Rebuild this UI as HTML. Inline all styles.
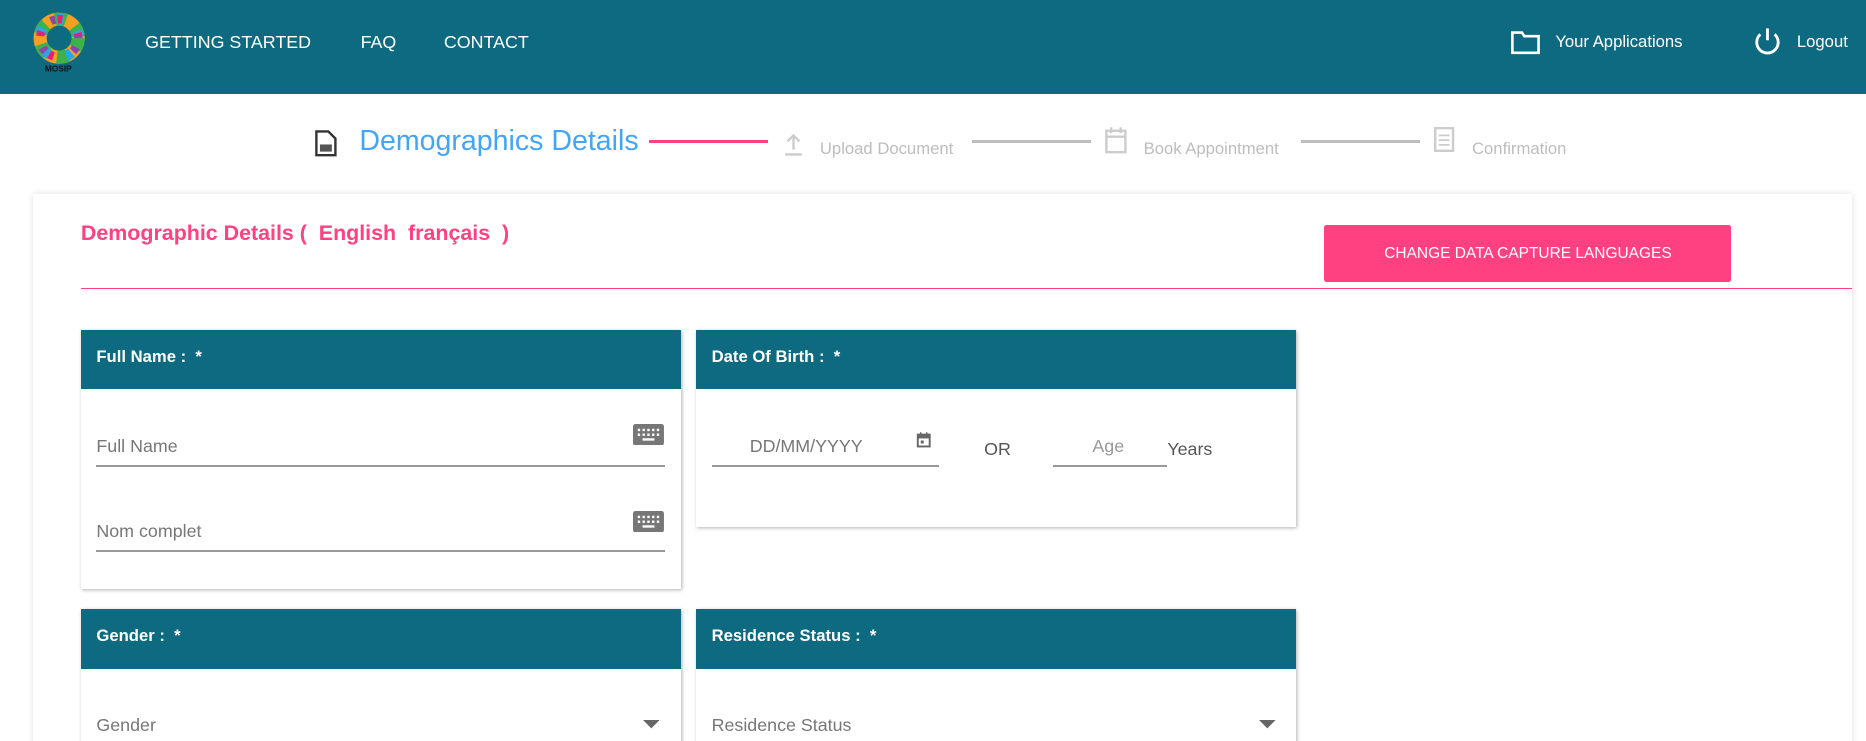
<!DOCTYPE html>
<html><head><meta charset="utf-8"><style>
html,body{margin:0;padding:0;background:#fff;overflow:hidden}
body{width:1866px;height:741px}
#w{zoom:1.19;width:1568px;height:623px;position:relative;font-family:"Liberation Sans",sans-serif;overflow:hidden}
.a{position:absolute}
.hdr{left:0;top:0;width:1568px;height:79px;background:#0d6a80}
.nav{color:#fff;font-size:15px;top:27px}
.step{color:#bdbdbd;font-size:14px}
.line{height:2px;background:#bdbdbd}
.card{background:#fff;box-shadow:1px 1px 3px rgba(0,0,0,.3)}
.ch{background:#0d6a80;color:#fff;font-size:14px;font-weight:bold;height:50px;line-height:46px;padding-left:13px;box-sizing:border-box}
.ph{color:#777;font-size:15px}
.ul{height:1px;border-bottom:2px solid #999}
</style></head><body><div id="w">
<div class="a hdr"></div>
<svg class="a" style="left:28px;top:10px" width="46" height="52" viewBox="0 0 46 52">
<circle cx="22" cy="22" r="16" fill="none" stroke="#f4a020" stroke-width="11"/>
<circle cx="22" cy="22" r="16" fill="none" stroke="#3bb34a" stroke-width="11" stroke-dasharray="9 9"/>
<circle cx="22" cy="22" r="16" fill="none" stroke="#2aa7df" stroke-width="9" stroke-dasharray="5 15" stroke-dashoffset="6"/>
<circle cx="22" cy="22" r="16" fill="none" stroke="#e6207a" stroke-width="7" stroke-dasharray="4 18" stroke-dashoffset="14"/>
<circle cx="22" cy="22" r="16" fill="none" stroke="#8e44ad" stroke-width="7" stroke-dasharray="4 26" stroke-dashoffset="22"/>
<circle cx="22" cy="22" r="10" fill="#0d6a80"/>
<text x="10" y="50" font-size="7" font-weight="bold" fill="#111" font-family="Liberation Sans">MOSIP</text></svg>
<div class="a nav" style="left:122px">GETTING STARTED</div>
<div class="a nav" style="left:303px">FAQ</div>
<div class="a nav" style="left:373px">CONTACT</div>
<svg class="a" style="left:1269px;top:24px" width="26" height="22"><path d="M2 3h8l2 3h12v14H2z" fill="none" stroke="#fff" stroke-width="2.2"/></svg>
<div class="a nav" style="left:1307px;font-size:14px">Your Applications</div>
<svg class="a" style="left:1472px;top:22px" width="26" height="26"><path d="M7 7A9 9 0 1 0 19 7" fill="none" stroke="#fff" stroke-width="2.4"/><path d="M13 2v10" stroke="#fff" stroke-width="2.4"/></svg>
<div class="a nav" style="left:1510px;font-size:14px">Logout</div>

<svg class="a" style="left:264px;top:108px" width="20" height="24"><path d="M2 2h10l6 6v14H2z" fill="#fff" stroke="#333" stroke-width="2"/><rect x="5" y="13" width="10" height="6" fill="#555"/></svg>
<div class="a" style="left:302px;top:105px;font-size:24px;color:#42a5f5">Demographics Details</div>
<div class="a" style="left:545px;top:118px;width:100px;height:2px;background:#ff4081"></div>
<svg class="a" style="left:659px;top:112px" width="16" height="20"><path d="M8 2v12M3 7l5-5 5 5M1 18h14" stroke="#ccc" stroke-width="2" fill="none"/></svg>
<div class="a step" style="left:689px;top:117px">Upload Document</div>
<div class="a line" style="left:817px;top:118px;width:100px"></div>
<svg class="a" style="left:928px;top:106px" width="20" height="24"><rect x="2" y="4" width="16" height="18" fill="none" stroke="#ccc" stroke-width="2"/><path d="M2 9h16M6 1v5M14 1v5" stroke="#ccc" stroke-width="2"/></svg>
<div class="a step" style="left:961px;top:117px">Book Appointment</div>
<div class="a line" style="left:1093px;top:118px;width:100px"></div>
<svg class="a" style="left:1205px;top:107px" width="18" height="22"><rect x="1" y="1" width="15" height="19" fill="none" stroke="#ccc" stroke-width="2"/><path d="M4 7h9M4 11h9M4 15h9" stroke="#ccc" stroke-width="1.5"/></svg>
<div class="a step" style="left:1237px;top:117px">Confirmation</div>

<div class="a" style="left:28px;top:163px;width:1528px;height:470px;background:#fff;box-shadow:0 0 6px rgba(0,0,0,.12)"></div>
<div class="a" style="left:68px;top:186px;font-size:18px;font-weight:bold;color:#ff4081">Demographic Details (&nbsp; English&nbsp; français&nbsp; )</div>
<div class="a" style="left:1113px;top:189px;width:342px;height:48px;background:#ff4081;border-radius:2px;color:#fff;font-size:13px;text-align:center;line-height:48px">CHANGE DATA CAPTURE LANGUAGES</div>
<div class="a" style="left:68px;top:242px;width:1488px;height:1px;background:#ff4081"></div>

<div class="a card" style="left:68px;top:277px;width:504px;height:218px"><div class="ch">Full Name :&nbsp; *</div></div>
<div class="a ph" style="left:81px;top:366px">Full Name</div>
<div class="a ul" style="left:81px;top:390px;width:478px"></div>
<div class="a ph" style="left:81px;top:438px">Nom complet</div>
<div class="a ul" style="left:81px;top:461px;width:478px"></div>
<svg class="a" style="left:532px;top:356px" width="26" height="18"><rect x="0" y="0" width="26" height="18" rx="2" fill="#777"/><g fill="#fff"><rect x="4" y="4" width="2" height="2"/><rect x="8" y="4" width="2" height="2"/><rect x="12" y="4" width="2" height="2"/><rect x="16" y="4" width="2" height="2"/><rect x="20" y="4" width="2" height="2"/><rect x="4" y="8" width="2" height="2"/><rect x="8" y="8" width="2" height="2"/><rect x="12" y="8" width="2" height="2"/><rect x="16" y="8" width="2" height="2"/><rect x="20" y="8" width="2" height="2"/><rect x="8" y="12" width="10" height="2"/></g></svg>
<svg class="a" style="left:532px;top:429px" width="26" height="18"><rect x="0" y="0" width="26" height="18" rx="2" fill="#777"/><g fill="#fff"><rect x="4" y="4" width="2" height="2"/><rect x="8" y="4" width="2" height="2"/><rect x="12" y="4" width="2" height="2"/><rect x="16" y="4" width="2" height="2"/><rect x="20" y="4" width="2" height="2"/><rect x="4" y="8" width="2" height="2"/><rect x="8" y="8" width="2" height="2"/><rect x="12" y="8" width="2" height="2"/><rect x="16" y="8" width="2" height="2"/><rect x="20" y="8" width="2" height="2"/><rect x="8" y="12" width="10" height="2"/></g></svg>

<div class="a card" style="left:585px;top:277px;width:504px;height:166px"><div class="ch">Date Of Birth :&nbsp; *</div></div>
<div class="a ph" style="left:630px;top:366px">DD/MM/YYYY</div>
<svg class="a" style="left:770px;top:362px" width="14" height="16"><rect x="1.5" y="3" width="10" height="10" fill="none" stroke="#666" stroke-width="1.6"/><path d="M1.5 5h10" stroke="#666" stroke-width="2.5"/><path d="M4 1v3M9 1v3" stroke="#666" stroke-width="1.2"/><rect x="4" y="8" width="2.5" height="2.5" fill="#666"/></svg>
<div class="a ul" style="left:598px;top:390px;width:191px"></div>
<div class="a" style="left:827px;top:369px;font-size:15px;color:#555">OR</div>
<div class="a ph" style="left:918px;top:366px;color:#999">Age</div>
<div class="a ul" style="left:885px;top:390px;width:96px"></div>
<div class="a" style="left:981px;top:369px;font-size:15px;color:#555">Years</div>

<div class="a card" style="left:68px;top:512px;width:504px;height:130px"><div class="ch">Gender :&nbsp; *</div></div>
<div class="a ph" style="left:81px;top:601px">Gender</div>
<svg class="a" style="left:540px;top:605px" width="14" height="8"><path d="M0 0h14L7 7z" fill="#666"/></svg>
<div class="a card" style="left:585px;top:512px;width:504px;height:130px"><div class="ch">Residence Status :&nbsp; *</div></div>
<div class="a ph" style="left:598px;top:601px">Residence Status</div>
<svg class="a" style="left:1058px;top:605px" width="14" height="8"><path d="M0 0h14L7 7z" fill="#666"/></svg>
</div></body></html>
